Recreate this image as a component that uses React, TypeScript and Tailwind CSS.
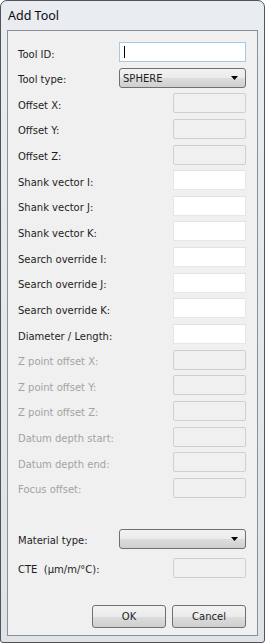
import React from "react";

const labelFont = { fontFamily: '"DejaVu Sans", Tahoma, sans-serif' };

function Row({ label, children, disabled }: { label: string; children: React.ReactNode; disabled?: boolean }) {
  return (
    <div className="flex h-[20px] items-center justify-between">
      <span
        className={`translate-y-[2px] text-[10px] leading-[13px] whitespace-pre ${disabled ? "text-[#a3a3a3]" : "text-[#1e1e1e]"}`}
        style={labelFont}
      >
        {label}
      </span>
      {children}
    </div>
  );
}

function Field({ disabled }: { disabled?: boolean }) {
  return disabled ? (
    <div className="h-[20px] w-[73px] rounded-[2px] border border-[#cfcfcf] bg-[#f0f0f0]" />
  ) : (
    <div className="h-[20px] w-[73px] border border-[#e6e7ea] border-t-[#e0e2e6] bg-white" />
  );
}

function Combo({ value }: { value: string }) {
  return (
    <div className="relative flex h-[20px] w-[127px] items-center rounded-[3px] border border-[#707070] bg-[linear-gradient(#f2f2f2_0%,#ebebeb_50%,#dddddd_50%,#cfcfcf_100%)] pl-[3px]">
      <span className="text-[10px] leading-[13px] text-[#1e1e1e] translate-y-[1px]" style={labelFont}>
        {value}
      </span>
      <svg className="absolute right-[6px] top-[7px]" width="8" height="4" viewBox="0 0 8 4">
        <polygon points="0,0 7,0 3.5,4" fill="#000" />
      </svg>
    </div>
  );
}

function Button({ label }: { label: string }) {
  return (
    <div className="flex h-[23px] w-[74px] items-center justify-center rounded-[3px] border border-[#707070] bg-[linear-gradient(#f2f2f2_0%,#ebebeb_50%,#dddddd_50%,#cfcfcf_100%)]">
      <span className="text-[10px] leading-[13px] text-[#1e1e1e]" style={labelFont}>
        {label}
      </span>
    </div>
  );
}

export default function App() {
  const enabledRows = [
    "Shank vector I:",
    "Shank vector J:",
    "Shank vector K:",
    "Search override I:",
    "Search override J:",
    "Search override K:",
    "Diameter / Length:",
  ];
  const disabledRows = [
    "Z point offset X:",
    "Z point offset Y:",
    "Z point offset Z:",
    "Datum depth start:",
    "Datum depth end:",
    "Focus offset:",
  ];
  return (
    <div className="h-[643px] w-[265px] bg-white">
      <div className="flex h-full flex-col rounded-t-[7px] rounded-b-[3px] border border-[#505458] bg-[linear-gradient(180deg,#e9ecf0_0%,#dfe3e8_100%)] px-[6px] pb-[6px]">
        <div className="flex h-[29px] items-center pl-[1px] pt-[2px]">
          <span className="text-[12.5px] text-[#0b0b0b]" style={{ fontFamily: '"Noto Sans", "Open Sans", sans-serif' }}>
            Add Tool
          </span>
        </div>
        <div className="flex flex-1 flex-col border border-[#8c8f94] bg-[#f0f0f0] pl-[10px] pr-[11px] pt-[11px]">
          <div className="flex flex-col gap-[5.65px]">
            <Row label="Tool ID:">
              <div className="relative h-[20px] w-[127px] border border-[#a7c9e6] bg-white">
                <div className="absolute left-[4px] top-[3px] h-[12px] w-[1px] bg-black" />
              </div>
            </Row>
            <Row label="Tool type:">
              <Combo value="SPHERE" />
            </Row>
            <Row label="Offset X:">
              <Field disabled />
            </Row>
            <Row label="Offset Y:">
              <Field disabled />
            </Row>
            <Row label="Offset Z:">
              <Field disabled />
            </Row>
            {enabledRows.map((l) => (
              <Row key={l} label={l}>
                <Field />
              </Row>
            ))}
            {disabledRows.map((l) => (
              <Row key={l} label={l} disabled>
                <Field disabled />
              </Row>
            ))}
          </div>
          <div className="mt-[31px] flex flex-col gap-[9px]">
            <Row label="Material type:">
              <Combo value="" />
            </Row>
            <Row label="CTE  (μm/m/°C):">
              <Field disabled />
            </Row>
          </div>
          <div className="mt-[27px] flex justify-end gap-[6px]">
            <Button label="OK" />
            <Button label="Cancel" />
          </div>
        </div>
      </div>
    </div>
  );
}
